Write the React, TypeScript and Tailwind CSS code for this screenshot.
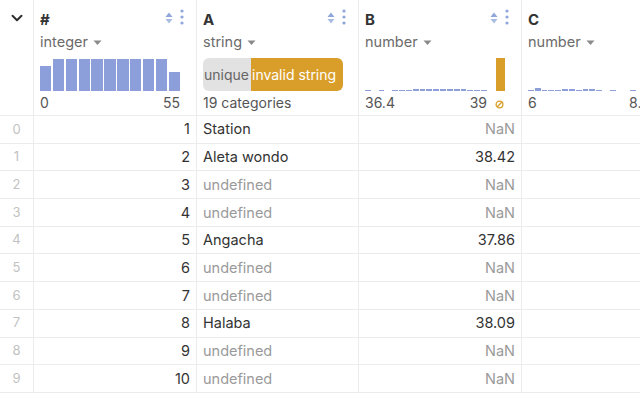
import React from "react";

const border = "border-[#ececec]";

function SortIcon() {
  return (
    <svg width="8" height="12" viewBox="0 0 8 12">
      <path d="M4 0.5 L7.5 5 L0.5 5 Z" fill="#8ea6d9" />
      <path d="M4 11.5 L7.5 7 L0.5 7 Z" fill="#a9bde3" />
    </svg>
  );
}

function Kebab() {
  return (
    <svg width="4" height="16" viewBox="0 0 4 16">
      <circle cx="2" cy="2" r="1.6" fill="#8ea6d9" />
      <circle cx="2" cy="8" r="1.6" fill="#8ea6d9" />
      <circle cx="2" cy="14" r="1.6" fill="#8ea6d9" />
    </svg>
  );
}

function Caret() {
  return (
    <svg width="9" height="6" viewBox="0 0 9 6" className="ml-[5px] mt-[2px]">
      <path d="M0.5 0.5 L8.5 0.5 L4.5 5 Z" fill="#8a8a8a" />
    </svg>
  );
}

function NullIcon() {
  return (
    <svg width="9" height="9" viewBox="0 0 9 9">
      <circle cx="4.5" cy="4.5" r="3.4" fill="none" stroke="#d99e2a" strokeWidth="1.3" />
      <path d="M2.3 6.7 L6.7 2.3" stroke="#d99e2a" strokeWidth="1.3" />
    </svg>
  );
}

function Header({
  title,
  type,
  children,
  last = false,
}: {
  title: string;
  type: string;
  children: React.ReactNode;
  last?: boolean;
}) {
  return (
    <div className={`relative h-[116px] border-b ${border} ${last ? "" : "border-r"} pl-[6px] pt-[9px] flex flex-col`}>
      <div className="h-[22px] text-[15px] font-bold text-[#333] leading-[22px]">{title}</div>
      <div className="h-[22px] flex items-center text-[14.5px] text-[#6b6b6b] leading-[22px]">
        {type}
        <Caret />
      </div>
      <div className="w-[140px] mt-[5px]">{children}</div>
      <div className="absolute right-[12px] top-[9px] flex items-start gap-[7px]">
        <div className="mt-[3px]">
          <SortIcon />
        </div>
        <Kebab />
      </div>
    </div>
  );
}

function Labels({ left, right, extra }: { left: string; right: string; extra?: React.ReactNode }) {
  return (
    <div className="flex justify-between items-center h-[20px] text-[14px] text-[#555] leading-[20px] mt-[2px]">
      <span>{left}</span>
      <span className="flex items-center">
        {right}
        {extra}
      </span>
    </div>
  );
}

const nullMark = (
  <span className="ml-[8px] mr-[1px] mt-[2px]">
    <NullIcon />
  </span>
);

const idHeights = [25, 32, 32, 32, 32, 32, 32, 32, 32, 32, 19];
const bHeights = [1, 0, 1, 0, 1, 1, 1, 2, 2, 2, 2, 2, 2, 2, 2, 1, 1, 1];
const cHeights = [1, 3, 1, 1, 1, 2, 2, 1, 2, 2, 1, 0, 1, 0, 0, 1, 0, 1];

const rows: [string, string, string][] = [
  ["1", "Station", "NaN"],
  ["2", "Aleta wondo", "38.42"],
  ["3", "undefined", "NaN"],
  ["4", "undefined", "NaN"],
  ["5", "Angacha", "37.86"],
  ["6", "undefined", "NaN"],
  ["7", "undefined", "NaN"],
  ["8", "Halaba", "38.09"],
  ["9", "undefined", "NaN"],
  ["10", "undefined", "NaN"],
];

export default function App() {
  return (
    <div
      className="w-[640px] h-[400px] overflow-hidden bg-white"
      style={{ fontFamily: "Inter, 'Noto Sans', sans-serif" }}
    >
      <div className="grid grid-cols-[34px_163px_162px_163px_163px] w-[685px]">
        {/* header */}
        <div className={`h-[116px] border-r border-b ${border} flex justify-center pt-[9px]`}>
          <svg width="18" height="18" viewBox="0 0 24 24" fill="none" stroke="#2e2e2e" strokeWidth="2.6" strokeLinecap="round" strokeLinejoin="round">
            <path d="M6 9l6 6 6-6" />
          </svg>
        </div>
        <Header title="#" type="integer">
          <div className="flex items-end h-[33px] gap-[1.5px]">
            {idHeights.map((h, i) => (
              <div key={i} className="flex-1 bg-[#8d9fda]" style={{ height: h }} />
            ))}
          </div>
          <Labels left="0" right="55" />
        </Header>
        <Header title="A" type="string">
          <div className="flex h-[33px] rounded-[6px] overflow-hidden text-[14px] leading-[33px]">
            <div className="w-[48px] bg-[#e2e2e2] text-[#666] pl-[1px]">unique</div>
            <div className="flex-1 bg-[#d99e2a] text-white pl-[1px]">invalid string</div>
          </div>
          <Labels left="19 categories" right="" />
        </Header>
        <Header title="B" type="number">
          <div className="flex items-end h-[33px]">
            <div className="flex items-end w-[122px] gap-[1px] h-full">
              {bHeights.map((h, i) => (
                <div key={i} className="flex-1 bg-[#8d9fda]" style={{ height: h }} />
              ))}
            </div>
            <div className="ml-auto w-[9px] h-[33px] bg-[#d99e2a]" />
          </div>
          <Labels left="36.4" right="39" extra={nullMark} />
        </Header>
        <Header title="C" type="number" last>
          <div className="flex items-end h-[33px]">
            <div className="flex items-end w-[122px] gap-[1px] h-full">
              {cHeights.map((h, i) => (
                <div key={i} className="flex-1 bg-[#8d9fda]" style={{ height: h }} />
              ))}
            </div>
            <div className="ml-auto w-[9px] h-[33px] bg-[#d99e2a]" />
          </div>
          <Labels left="6" right="8.9" extra={nullMark} />
        </Header>

        {rows.map((r, i) => (
          <React.Fragment key={i}>
            <div className={`h-[27.7px] border-r border-b ${border} flex items-center justify-center text-[13px] text-[#c2c2c2]`}>
              {i}
            </div>
            <div className={`h-[27.7px] border-r border-b ${border} flex items-center justify-end pr-[6px] text-[14.5px] text-[#333]`}>
              {r[0]}
            </div>
            <div
              className={`h-[27.7px] border-r border-b ${border} flex items-center pl-[6px] text-[14.5px] ${
                r[1] === "undefined" ? "text-[#9a9a9a]" : "text-[#333]"
              }`}
            >
              {r[1]}
            </div>
            <div
              className={`h-[27.7px] border-r border-b ${border} flex items-center justify-end pr-[6px] text-[14.5px] ${
                r[2] === "NaN" ? "text-[#9a9a9a]" : "text-[#333]"
              }`}
            >
              {r[2]}
            </div>
            <div className={`h-[27.7px] border-b ${border}`} />
          </React.Fragment>
        ))}
      </div>
    </div>
  );
}
